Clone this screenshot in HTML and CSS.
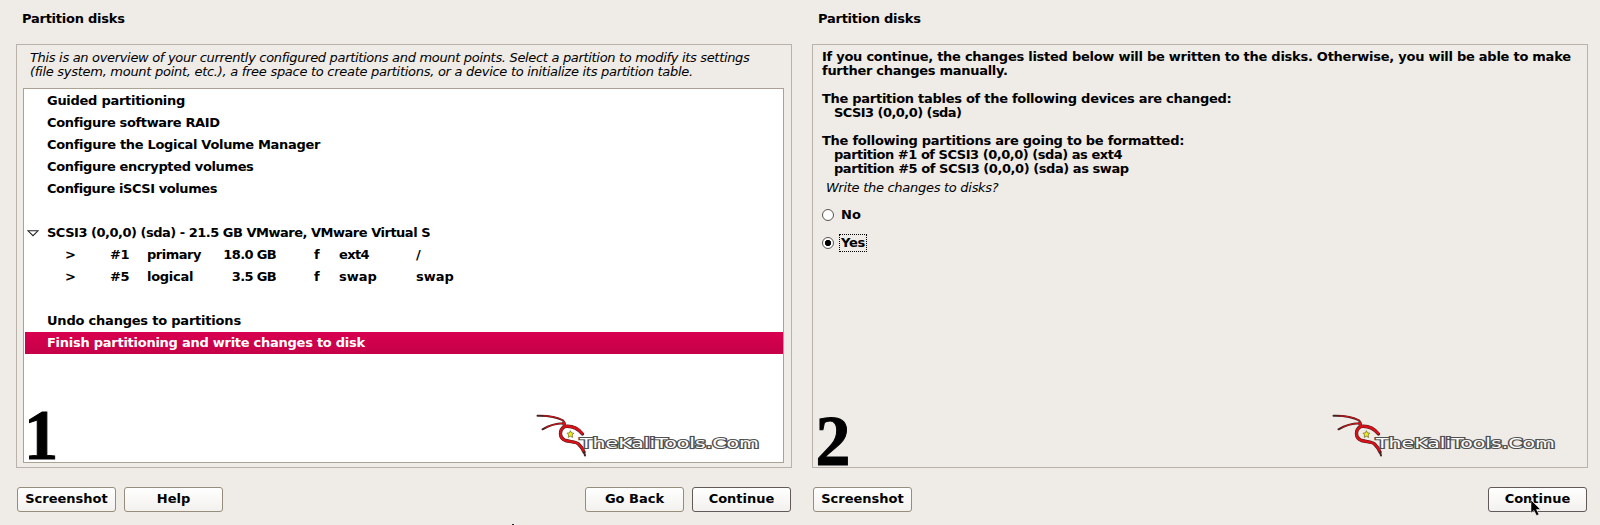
FILE: index.html
```html
<!DOCTYPE html>
<html lang="en">
<head>
<meta charset="utf-8">
<title>Partition disks</title>
<link rel="stylesheet" href="styles.css">
</head>
<body>
<svg class="defs" width="0" height="0" aria-hidden="true">
  <symbol id="logo" viewBox="0 0 230 50">
    <g fill="none" stroke-linecap="round" stroke-linejoin="round">
      <g stroke="#4a2020">
        <path stroke-width="2" d="M1.500 4.700C12 4.500 21 6 27.300 9.500L28.300 14M6.500 18.300C13 14.500 20 12.500 27.300 12.300"/>
        <path stroke-width="3.400" d="M28 12L28.500 15.500C36 14.500 42 17.500 46.500 23M28.500 15.500C23 19 23 27 29.500 29.500C35 31 40 30.500 42.500 33C45.500 36 47 38 48 41"/>
        <path stroke-width="2" d="M48 41L49 44.500"/>
      </g>
      <g stroke="#d81018">
        <path stroke-width="1" d="M8 4.900C15 5 21 6 27.300 9.500L28.300 14M10 16.600C15 14 20 12.500 27.300 12.300"/>
        <path stroke-width="2.400" d="M28 12L28.500 15.500C36 14.500 42 17.500 46 22.300M28.500 15.500C23 19 23 27 29.500 29.500C35 31 40 30.500 42.500 33C45.500 36 46.500 37.500 47.500 39.500"/>
      </g>
    </g>
    <path fill="#f4ee20" stroke="#77702a" stroke-width=".8" d="M34.400 19.700l1 2.200 2.400.3-1.700 1.700.5 2.500-2.200-1.200-2.200 1.200.5-2.500-1.700-1.700 2.400-.3z"/>
    <text class="logo-text" x="44" y="37" textLength="179" lengthAdjust="spacingAndGlyphs">TheKaliTools.Com</text>
  </symbol>
</svg>
<main class="screens">
  <section class="screen">
    <h1 class="title t24">Partition disks</h1>
    <div class="frame">
      <p class="intro"><span class="t32">This is an overview of your currently configured partitions and mount points. Select a partition to modify its settings</span><br><span class="t28">(file system, mount point, etc.), a free space to create partitions, or a device to initialize its partition table.</span></p>
      <div class="list">
        <div class="row t28">Guided partitioning</div>
        <div class="row t36">Configure software RAID</div>
        <div class="row t32">Configure the Logical Volume Manager</div>
        <div class="row t36">Configure encrypted volumes</div>
        <div class="row t42">Configure iSCSI volumes</div>
        <div class="row"></div>
        <div class="row t49"><svg class="expander" width="12" height="7" viewBox="0 0 12 7"><path d="M1 .8H11L6 5.700Z" fill="#fff" stroke="#222" stroke-width="1.100"/></svg>SCSI3 (0,0,0) (sda) - 21.5 GB VMware, VMware Virtual S</div>
        <div class="row part"><span>&gt;</span><span class="t49">#1</span><span class="t49">primary</span><span class="size t65">18.0 GB</span><span>f</span><span class="t65">ext4</span><span>/</span></div>
        <div class="row part"><span>&gt;</span><span class="t49">#5</span><span class="t28">logical</span><span class="size t65">3.5 GB</span><span>f</span><span>swap</span><span>swap</span></div>
        <div class="row"></div>
        <div class="row t21">Undo changes to partitions</div>
        <div class="row selected t26">Finish partitioning and write changes to disk</div>
      </div>
      <span class="step one">1</span>
      <svg class="logo" width="230" height="50"><use href="#logo"/></svg>
    </div>
    <footer class="buttons">
      <button class="btn">Screenshot</button>
      <button class="btn">Help</button>
      <button class="btn push">Go Back</button>
      <button class="btn primary">Continue</button>
    </footer>
    <span class="speck"></span>
  </section>
  <section class="screen">
    <h1 class="title t24">Partition disks</h1>
    <div class="frame">
      <div class="message">
        <p><span class="t26">If you continue, the changes listed below will be written to the disks. Otherwise, you will be able to make</span><br><span class="t28">further changes manually.</span></p>
        <p><span class="t28">The partition tables of the following devices are changed:</span><br><span class="indent t56">SCSI3 (0,0,0) (sda)</span></p>
        <p><span class="t26">The following partitions are going to be formatted:</span><br><span class="indent t47">partition #1 of SCSI3 (0,0,0) (sda) as ext4</span><br><span class="indent t44">partition #5 of SCSI3 (0,0,0) (sda) as swap</span></p>
      </div>
      <p class="question t28">Write the changes to disks?</p>
      <div class="option"><span class="radio"></span><span class="label">No</span></div>
      <div class="option"><span class="radio on"></span><span class="label focus t24">Yes</span></div>
      <span class="step two">2</span>
      <svg class="logo" width="230" height="50"><use href="#logo"/></svg>
    </div>
    <footer class="buttons">
      <button class="btn">Screenshot</button>
      <button class="btn primary push">Continue<svg class="cursor" width="12" height="18" viewBox="0 0 12 18"><path d="M1 1V14L4 11.500L6.500 16.500L9 15.500L6.500 10.500H10.500Z" fill="#000" stroke="#fff" stroke-width=".5"/></svg></button>
    </footer>
  </section>
</main>
</body>
</html>
```
FILE: styles.css
```css
* { box-sizing: border-box; }
body {
  margin: 0;
  width: 1600px;
  height: 525px;
  overflow: hidden;
  background: #efebe7;
  color: #000;
  font: bold 13px/14px "DejaVu Sans", sans-serif;
}
p, h1 { margin: 0; }
.defs { position: absolute; }

/* tracking steps, in hundredths of a pixel */
.t21 { letter-spacing: -.21px; }
.t24 { letter-spacing: -.24px; }
.t26 { letter-spacing: -.26px; }
.t28 { letter-spacing: -.28px; }
.t32 { letter-spacing: -.32px; }
.t36 { letter-spacing: -.36px; }
.t42 { letter-spacing: -.42px; }
.t44 { letter-spacing: -.44px; }
.t47 { letter-spacing: -.47px; }
.t49 { letter-spacing: -.49px; }
.t56 { letter-spacing: -.56px; }
.t65 { letter-spacing: -.65px; }

.screens { display: flex; height: 525px; }
.screen {
  position: relative;
  width: 796px;
  padding: 11px 4px 0 16px;
  display: flex;
  flex-direction: column;
}
.title { font-size: 13px; line-height: 16px; padding-left: 6px; height: 33px; }
.frame {
  position: relative;
  width: 776px;
  height: 424px;
  border: 1px solid #b9b2ab;
  display: flex;
  flex-direction: column;
}
.intro { font-weight: normal; font-style: italic; padding: 6px 0 0 13px; height: 43px; white-space: nowrap; }
.list {
  margin: 0 7px 0 6px;
  height: 375px;
  padding: 1px 0 1px 1px;
  border: 1px solid #aca294;
  background: #fff;
}
.row { height: 22px; line-height: 22px; padding-left: 22px; white-space: pre; position: relative; }
.expander { position: absolute; left: 2px; top: 8px; }
.selected { color: #fff; background: linear-gradient(#d90050, #c40048); }
.part { display: grid; grid-template-columns: 45px 37px 67px 62px 63px 77px 60px; padding-left: 40px; }
.part .size { text-align: right; }
.part span:nth-child(5) { padding-left: 38px; }
.step { position: absolute; font: bold 72px/72px "Liberation Serif", serif; -webkit-text-stroke: 1px #000; }
.one { left: 6px; top: 354px; transform: scaleX(.95); }
.two { left: 2px; top: 360px; transform: scaleX(.97); }
.logo { position: absolute; left: 519px; top: 366px; }
.logo-text { font: 14px "DejaVu Sans", sans-serif; fill: #fff; stroke: #505050; stroke-width: 2.2px; paint-order: stroke; }
.buttons { display: flex; gap: 8px; padding: 19px 0 0 1px; width: 775px; }
.btn {
  position: relative;
  width: 99px;
  height: 25px;
  padding: 0 0 2px;
  font: inherit;
  color: #000;
  border: 1px solid #978d7c;
  border-radius: 3px;
  background: linear-gradient(#fff, #f3f1ee);
}
.primary { border-color: #625a58; }
.push { margin-left: auto; }
.cursor { position: absolute; left: 41px; top: 11px; }
.speck { position: absolute; left: 512px; top: 524px; width: 2px; height: 1px; background: #222; }
.message { padding: 5px 0 0 9px; display: flex; flex-direction: column; gap: 14px; white-space: nowrap; }
.indent { padding-left: 12px; }
.question { font-weight: normal; font-style: italic; padding: 5px 0 0 13px; height: 25px; }
.option { display: flex; align-items: center; height: 28px; padding-left: 9px; gap: 5px; }
.radio { width: 12px; height: 12px; border: 1px solid #595450; border-radius: 50%; background: #fff; }
.on { background: radial-gradient(circle, #000 2.800px, #fff 3.500px); }
.label { padding: 0 1px; border: 1px dotted transparent; line-height: 16px; }
.focus { border-color: #000; }
```
